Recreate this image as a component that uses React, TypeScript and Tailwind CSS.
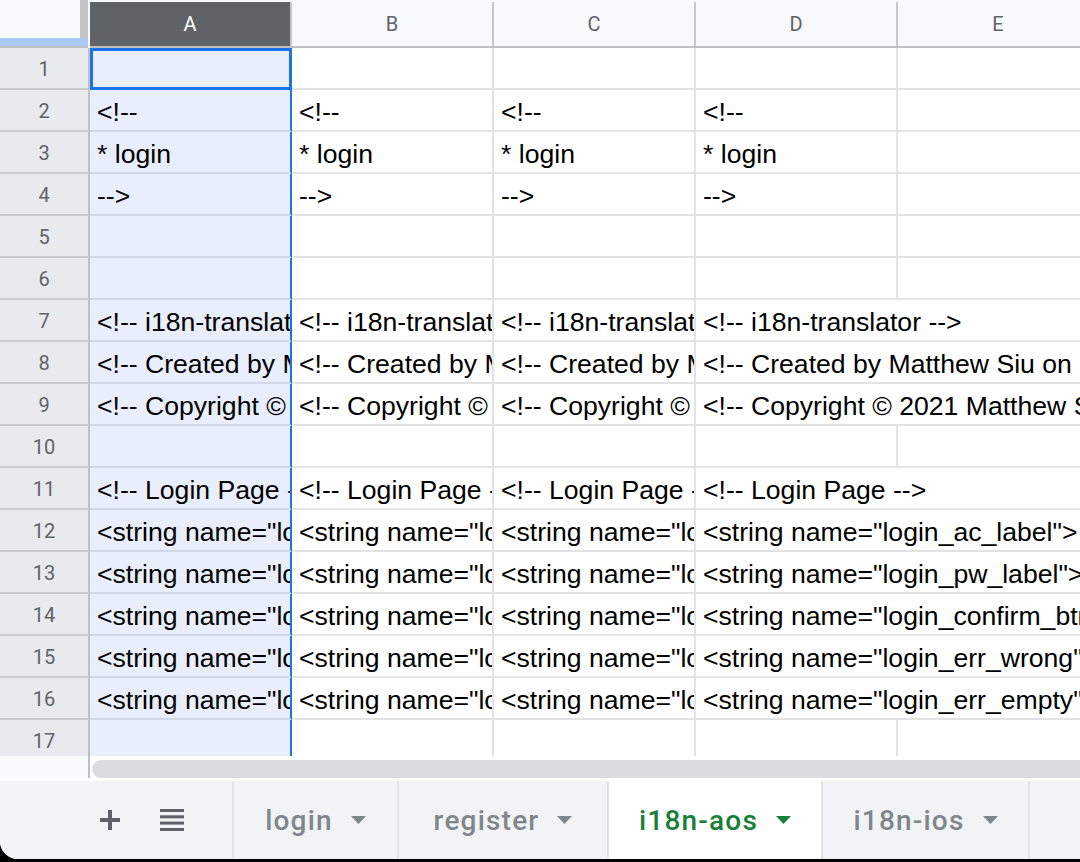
const COLS = ["A", "B", "C", "D", "E"];

// same text goes into A..D, E stays empty
const ROWS: string[] = [
  "",
  "<!--",
  "* login",
  "-->",
  "",
  "",
  "<!-- i18n-translator -->",
  "<!-- Created by Matthew Siu on 2021/05/20 -->",
  "<!-- Copyright © 2021 Matthew Siu. All rights reserved. -->",
  "",
  "<!-- Login Page -->",
  '<string name="login_ac_label"> Account</string>',
  '<string name="login_pw_label"> Password</string>',
  '<string name="login_confirm_btn">Login</string>',
  '<string name="login_err_wrong"> Wrong account or password</string>',
  '<string name="login_err_empty"> Please fill in all fields</string>',
  "",
];

const TABS = [
  { name: "login", w: "w-[165px]" },
  { name: "register", w: "w-[210px]" },
  { name: "i18n-aos", w: "w-[214px]", active: true },
  { name: "i18n-ios", w: "w-[207px]" },
];

const cell = "shrink-0 flex items-center pl-[7px] pt-[5px] overflow-hidden whitespace-nowrap";

function Caret({ color }: { color: string }) {
  return (
    <svg width="15" height="8" viewBox="0 0 15 8" className="shrink-0">
      <polygon points="0,0 15,0 7.5,8" fill={color} />
    </svg>
  );
}

function HeaderRow() {
  return (
    <div className="flex h-[48px] shrink-0">
      {/* corner with freeze handles */}
      <div className="w-[90px] shrink-0 flex flex-col">
        <div className="flex h-[38px]">
          <div className="flex-1 bg-[#f8f9fa]" />
          <div className="w-[8px] bg-[#c4c4c4]" />
          <div className="w-[2px] bg-[#f8f9fa]" />
        </div>
        <div className="h-[8px] w-[88px] bg-[#a8c7fa]" />
        <div className="h-[2px] w-[88px] bg-[#c0c0c0]" />
      </div>
      <div className="flex flex-col flex-1 bg-[#f8f9fa]">
        <div className="h-[2px]" />
        <div className="flex h-[44px]">
          {COLS.map((c) => (
            <div
              key={c}
              className={`w-[202px] shrink-0 flex items-center justify-center border-r-2 border-[#c7c7c7] text-[20px] font-['Roboto',sans-serif] ${
                c === "A" ? "bg-[#5f6368] text-white" : "text-[#5f6368]"
              }`}
            >
              {c}
            </div>
          ))}
        </div>
        <div className="h-[2px] bg-[#c0c0c0]" />
      </div>
    </div>
  );
}

function Row({ idx, text }: { idx: number; text: string }) {
  const wide = text.length > 8;
  return (
    <div className="flex h-[42px] shrink-0">
      <div className="w-[90px] shrink-0 flex items-center justify-center pt-[2px] bg-[#e8eaed] border-r-2 border-r-[#c0c0c0] border-b-2 border-b-[#cacbcd] text-[20px] text-[#5f6368] font-['Roboto',sans-serif]">
        {idx}
      </div>
      {/* column A (selected) */}
      <div
        className={`w-[202px] ${cell} bg-[#e8eefb] ${
          idx === 1
            ? "border-[3px] border-[#1a73e8]"
            : "border-b-2 border-b-[#d3d9e4] border-r-2 border-r-[#1a73e8]"
        }`}
      >
        {text}
      </div>
      <div className={`w-[202px] ${cell} border-r-2 border-b-2 border-[#e2e2e2]`}>{text}</div>
      <div className={`w-[202px] ${cell} border-r-2 border-b-2 border-[#e2e2e2]`}>{text}</div>
      {wide ? (
        <div className={`w-[404px] ${cell} border-r-2 border-b-2 border-[#e2e2e2]`}>{text}</div>
      ) : (
        <>
          <div className={`w-[202px] ${cell} border-r-2 border-b-2 border-[#e2e2e2]`}>{text}</div>
          <div className="w-[202px] shrink-0 border-r-2 border-b-2 border-[#e2e2e2]" />
        </>
      )}
    </div>
  );
}

function TabBar() {
  return (
    <div className="flex h-[78px] shrink-0 bg-[#f1f3f4] font-['Roboto',sans-serif]">
      <div className="w-[232px] shrink-0 flex items-center pl-[100px] gap-[40px]">
        <svg width="20" height="20" viewBox="0 0 20 20">
          <rect x="8" y="0" width="4" height="20" fill="#5f6368" />
          <rect x="0" y="8" width="20" height="4" fill="#5f6368" />
        </svg>
        <svg width="24" height="22" viewBox="0 0 24 22">
          <rect x="0" y="0" width="24" height="3" fill="#5f6368" />
          <rect x="0" y="6.3" width="24" height="3" fill="#5f6368" />
          <rect x="0" y="12.6" width="24" height="3" fill="#5f6368" />
          <rect x="0" y="19" width="24" height="3" fill="#5f6368" />
        </svg>
      </div>
      {TABS.map((t) => (
        <div
          key={t.name}
          className={`${t.w} shrink-0 flex items-center justify-center gap-[18px] border-l-2 border-[#e2e3e5] ${
            t.active ? "bg-white text-[#188038]" : "text-[#80868b]"
          }`}
        >
          <span className="text-[28px] font-medium tracking-[1.2px] leading-none pt-[2px]">{t.name}</span>
          <Caret color={t.active ? "#188038" : "#80868b"} />
        </div>
      ))}
      <div className="flex-1 border-l-2 border-[#e2e3e5]" />
    </div>
  );
}

export default function App() {
  return (
    <div className="w-[1080px] h-[862px] bg-black overflow-hidden">
      <div className="h-[859px] bg-white rounded-bl-[18px] overflow-hidden flex flex-col">
        <div className="h-[756px] shrink-0 overflow-hidden flex flex-col text-[26.6px] text-black font-['Liberation_Sans',Arial,sans-serif]">
          <HeaderRow />
          {ROWS.map((text, i) => (
            <Row key={i} idx={i + 1} text={text} />
          ))}
        </div>
        {/* horizontal scrollbar */}
        <div className="flex h-[22px] shrink-0">
          <div className="w-[90px] shrink-0 bg-[#f8f9fa] border-r-2 border-[#c0c0c0]" />
          <div className="flex-1 pl-[2px] pt-[4px]">
            <div className="h-[18px] w-[1100px] rounded-full bg-[#dadce0]" />
          </div>
        </div>
        <div className="h-[3px] shrink-0 bg-white" />
        <TabBar />
      </div>
    </div>
  );
}
